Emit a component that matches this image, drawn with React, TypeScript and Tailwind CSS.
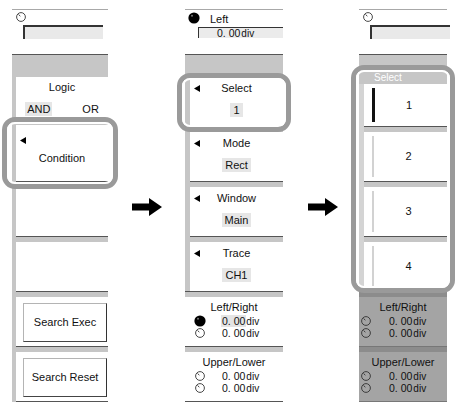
const font = "font-['Liberation_Sans',Arial,sans-serif]";

function Knob({ filled }: { filled?: boolean }) {
  if (filled) {
    return (
      <svg width="12" height="12" viewBox="0 0 12 12" className="shrink-0">
        <circle cx="6" cy="6" r="5.6" fill="#000" />
        <circle cx="4" cy="3.8" r="1" fill="#777" />
      </svg>
    );
  }
  return (
    <svg width="10" height="10" viewBox="0 0 10 10" className="shrink-0">
      <circle cx="5" cy="5" r="4.4" fill="none" stroke="#333" strokeWidth="0.9" />
      <path d="M2.6 2.4 L4.3 4.3" stroke="#333" strokeWidth="0.9" />
    </svg>
  );
}

function Tri() {
  return (
    <svg width="6" height="7" viewBox="0 0 6 7">
      <polygon points="6,0 6,7 0,3.5" fill="#000" />
    </svg>
  );
}

function Arrow() {
  return (
    <svg width="30" height="18" viewBox="0 0 30 18">
      <path d="M0 5.5 H17 V0 L30 9 L17 18 V12.5 H0 Z" fill="#000" />
    </svg>
  );
}

function Sep({ band = 'bg-[#c6c6c6]', line = 'bg-[#555]' }: { band?: string; line?: string }) {
  return (
    <div className="flex flex-col">
      <div className={`h-px ${line}`} />
      <div className={`h-[5px] ${band}`} />
    </div>
  );
}

function Val({ hl }: { hl?: boolean }) {
  return (
    <span className="text-[#111] leading-[12px] whitespace-nowrap">
      <span className={`text-[10.5px] px-[1px] ${hl ? 'bg-[#e4e4e4]' : ''}`}>0. 00</span>
      <span className="text-[10px]">div</span>
    </span>
  );
}

// header with outline knob + empty field
function BlankHeader() {
  return (
    <div className="h-[45px] border-t border-[#a8a8a8] bg-white flex flex-col">
      <div className="pl-[4px] pt-[2px]">
        <Knob />
      </div>
      <div className="mt-[3px] ml-[11px] w-[80px] h-[14px] bg-[#e9e9e9] border-t-2 border-l-2 border-[#333]" />
    </div>
  );
}

function Frame({ className }: { className: string }) {
  return (
    <div className={`absolute pointer-events-none rounded-[13px] border-[5px] border-[#9a9a9a] ${className}`}>
      <div className="h-full w-full rounded-[8px] border-2 border-white" />
    </div>
  );
}

function MenuItem({ title, value }: { title: string; value: string }) {
  return (
    <div className="h-[49px] bg-white flex flex-col pt-[4px]">
      <div className="flex items-center">
        <div className="w-[12px] pl-[4px] flex"><Tri /></div>
        <div className="flex-1 text-center text-[11px] leading-[14px] text-[#111]">{title}</div>
        <div className="w-[12px]" />
      </div>
      <div className="mt-[8px] flex justify-center">
        <span className="text-[11px] leading-[14px] px-[3px] bg-[#e6e6e6] text-[#111]">{value}</span>
      </div>
    </div>
  );
}

function Cursor({ title, first, gray }: { title: string; first?: boolean; gray?: boolean }) {
  const row = gray ? 'pl-[1px] gap-[16px]' : 'pl-[9px] gap-[15px]';
  return (
    <div className={`h-[49px] ${gray ? 'bg-[#a4a4a4]' : 'bg-white'} flex flex-col pt-[3px]`}>
      <div className="text-center text-[11px] leading-[14px] text-[#111]">{title}</div>
      <div className={`flex items-center h-[12px] mt-[1px] ${row}`}>
        <div className="w-[12px] flex justify-center"><Knob filled={first && !gray} /></div>
        <Val hl={first && !gray} />
      </div>
      <div className={`flex items-center h-[12px] ${row}`}>
        <div className="w-[12px] flex justify-center"><Knob /></div>
        <Val />
      </div>
    </div>
  );
}

function SoftButton({ label }: { label: string }) {
  return (
    <div className="h-[49px] bg-white pt-[6px] pl-[7px] pr-[1px]">
      <div className="h-[39px] border border-[#b4b4b4] border-r-[#333] border-b-[#444] flex items-center justify-center text-[11px] text-[#111]">
        {label}
      </div>
    </div>
  );
}

function SelectBtn({ n, active, h = 'h-[49px]' }: { n: string; active?: boolean; h?: string }) {
  return (
    <div className={`${h} bg-white flex py-[4px] pl-[8px]`}>
      <div className={active ? 'w-[3px] bg-[#111]' : 'w-[2px] bg-[#d2d2d2]'} />
      <div className="flex-1 flex items-center justify-center text-[11px] text-[#111] pr-[4px]">{n}</div>
    </div>
  );
}

export default function App() {
  return (
    <div className={`${font} w-[456px] h-[403px] bg-white overflow-hidden flex items-start`}>
      {/* panel 1 */}
      <div className="relative ml-[12px] w-[96px] pt-[9px]">
        <BlankHeader />
        <div className="h-px bg-[#555]" />
        <div className="h-[22px] bg-[#c6c6c6]" />
        <div className="flex">
          <div className="w-[4px] bg-[#c6c6c6]" />
          <div className="flex-1 flex flex-col">
            <div className="h-[42px] bg-white flex flex-col items-center pt-[3px] text-[11px] text-[#111]">
              <div className="leading-[14px]">Logic</div>
              <div className="mt-[8px] flex gap-[30px] leading-[14px]">
                <span className="bg-[#e6e6e6] px-[2px]">AND</span>
                <span>OR</span>
              </div>
            </div>
            <Sep />
            <div className="h-[56px] bg-white flex flex-col pt-[12px] pl-[4px]">
              <Tri />
              <div className="mt-[7px] text-center text-[11px] leading-[14px] text-[#111] pr-[4px]">Condition</div>
            </div>
            <Sep />
            <div className="h-[49px] bg-white" />
            <Sep />
            <div className="h-[49px] bg-white" />
            <Sep />
            <SoftButton label="Search Exec" />
            <Sep />
            <SoftButton label="Search Reset" />
            <div className="h-px bg-[#555]" />
          </div>
        </div>
        <Frame className="left-[-10px] top-[117px] w-[116px] h-[72px]" />
      </div>

      <div className="ml-[24px] mt-[198px]">
        <Arrow />
      </div>

      {/* panel 2 */}
      <div className="relative ml-[23px] w-[98px] pt-[9px]">
        <div className="h-[45px] border-t border-[#a8a8a8] bg-white flex flex-col">
          <div className="flex items-start h-[15px] pl-[3px] pt-[2px]">
            <Knob filled />
            <span className="ml-[10px] mt-[1px] text-[11px] leading-[12px] text-[#111]">Left</span>
          </div>
          <div className="mt-[2px] ml-[13px] h-[11px] bg-[#ebebeb] border-t border-l border-[#333] flex items-center pl-[17px]">
            <Val />
          </div>
        </div>
        <div className="h-px bg-[#555]" />
        <div className="h-[22px] bg-[#c6c6c6]" />
        <div className="flex">
          <div className="w-[5px] bg-[#c6c6c6]" />
          <div className="flex-1 flex flex-col">
            <MenuItem title="Select" value="1" />
            <Sep />
            <MenuItem title="Mode" value="Rect" />
            <Sep />
            <MenuItem title="Window" value="Main" />
            <Sep />
            <MenuItem title="Trace" value="CH1" />
          </div>
        </div>
        <Sep />
        <Cursor title="Left/Right" first />
        <Sep />
        <Cursor title="Upper/Lower" />
        <div className="h-px bg-[#555]" />
        <Frame className="left-[-8px] top-[73px] w-[114px] h-[59px]" />
      </div>

      <div className="ml-[25px] mt-[198px]">
        <Arrow />
      </div>

      {/* panel 3 */}
      <div className="relative ml-[21px] w-[88px] pt-[9px]">
        <BlankHeader />
        <div className="h-px bg-[#555]" />
        <div className="h-[29px] bg-[#c6c6c6] flex items-end pl-[15px] pb-[1px]">
          <span className="text-[10px] leading-[11px] text-white">Select</span>
        </div>
        <div className="flex">
          <div className="w-[5px] bg-[#d4d4d4]" />
          <div className="flex-1 flex flex-col">
            <SelectBtn n="1" active h="h-[42px]" />
            <Sep />
            <SelectBtn n="2" />
            <Sep />
            <SelectBtn n="3" />
            <Sep />
            <SelectBtn n="4" />
          </div>
        </div>
        <Sep band="bg-[#8c8c8c]" line="bg-[#8c8c8c]" />
        <Cursor title="Left/Right" gray />
        <Sep band="bg-[#8c8c8c]" line="bg-[#777]" />
        <Cursor title="Upper/Lower" gray />
        <div className="h-px bg-[#777]" />
        <Frame className="left-[-8px] top-[65px] w-[104px] h-[228px]" />
      </div>
    </div>
  );
}
